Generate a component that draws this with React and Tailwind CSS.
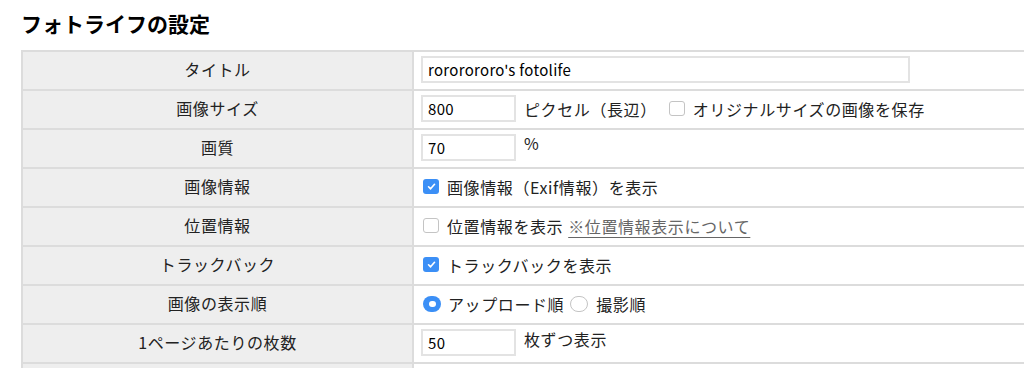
import React from 'react';

const Check = ({ checked }) =>
  checked ? (
    <span className="inline-flex h-[15px] w-[16px] items-center justify-center rounded-[3px] bg-[#3b8ff6]">
      <svg viewBox="0 0 12 12" className="h-[11px] w-[11px]" fill="none" stroke="white" strokeWidth="1.8" strokeLinecap="round" strokeLinejoin="round">
        <path d="M2.8 6.3 5 8.5 9.3 3.6" />
      </svg>
    </span>
  ) : (
    <span className="inline-block h-[15px] w-[16px] rounded-[3px] border border-[#c4c4c4] bg-white" />
  );

const Radio = ({ checked }) =>
  checked ? (
    <span className="inline-flex h-[16px] w-[18px] items-center justify-center rounded-full bg-[#3b8ff6]">
      <span className="h-[6px] w-[7px] rounded-full bg-white" />
    </span>
  ) : (
    <span className="inline-block h-[16px] w-[18px] rounded-full border border-[#c4c4c4] bg-white" />
  );

const TextBox = ({ value, wide }) => (
  <span
    className={`inline-flex h-[27px] items-center border-2 border-[#e3e3e3] bg-white px-[5px] text-[15px] tracking-[0.3px] text-black ${wide ? 'w-[489px]' : 'w-[95px]'}`}
  >
    {value}
  </span>
);

const rows = [
  { label: 'タイトル', body: <TextBox value="rororororo's fotolife" wide /> },
  {
    label: '画像サイズ',
    body: (
      <>
        <TextBox value="800" />
        <span className="ml-[8px]">ピクセル（長辺）</span>
        <span className="ml-[12px] flex"><Check /></span>
        <span className="ml-[8px]">オリジナルサイズの画像を保存</span>
      </>
    ),
  },
  {
    label: '画質',
    body: (
      <>
        <TextBox value="70" />
        <span className="ml-[8px] -translate-y-[5px]">%</span>
      </>
    ),
  },
  {
    label: '画像情報',
    body: (
      <>
        <span className="ml-[2px] flex"><Check checked /></span>
        <span className="ml-[8px]">画像情報（Exif情報）を表示</span>
      </>
    ),
  },
  {
    label: '位置情報',
    body: (
      <>
        <span className="ml-[2px] flex"><Check /></span>
        <span className="ml-[8px]">位置情報を表示</span>
        <span className="ml-[5px] text-[#666] underline underline-offset-[4px]">※位置情報表示について</span>
      </>
    ),
  },
  {
    label: 'トラックバック',
    body: (
      <>
        <span className="ml-[2px] flex"><Check checked /></span>
        <span className="ml-[8px]">トラックバックを表示</span>
      </>
    ),
  },
  {
    label: '画像の表示順',
    body: (
      <>
        <span className="ml-[2px] flex"><Radio checked /></span>
        <span className="ml-[7px]">アップロード順</span>
        <span className="ml-[6px] flex"><Radio /></span>
        <span className="ml-[8px]">撮影順</span>
      </>
    ),
  },
  {
    label: '1ページあたりの枚数',
    body: (
      <>
        <TextBox value="50" />
        <span className="ml-[8px] -translate-y-[4px]">枚ずつ表示</span>
      </>
    ),
  },
  { label: '', body: null },
];

export default function App() {
  return (
    <div
      className="h-[368px] w-[1024px] overflow-hidden bg-white text-[#222]"
      style={{ fontFamily: '"Noto Sans CJK JP", "Liberation Sans", sans-serif' }}
    >
      <h2 className="pl-[21px] pt-[10px] text-[21px] font-bold leading-[26px] text-black">フォトライフの設定</h2>
      <div className="ml-[21px] mt-[14px] w-[1040px] border-2 border-[#dcdcdc]">
        {rows.map((row, i) => (
          <div key={i} className={`grid grid-cols-[389px_1fr] ${i > 0 ? 'border-t-2 border-[#dcdcdc]' : ''}`}>
            <div className="flex h-[37px] items-center justify-center bg-[#eeeeee] pb-[3px] text-[16px] leading-none tracking-[0.6px]">{row.label}</div>
            <div className="flex h-[37px] items-center border-l-2 border-[#dcdcdc] pb-[2px] pl-[7px] text-[16px] leading-none tracking-[0.6px]">{row.body}</div>
          </div>
        ))}
      </div>
    </div>
  );
}
